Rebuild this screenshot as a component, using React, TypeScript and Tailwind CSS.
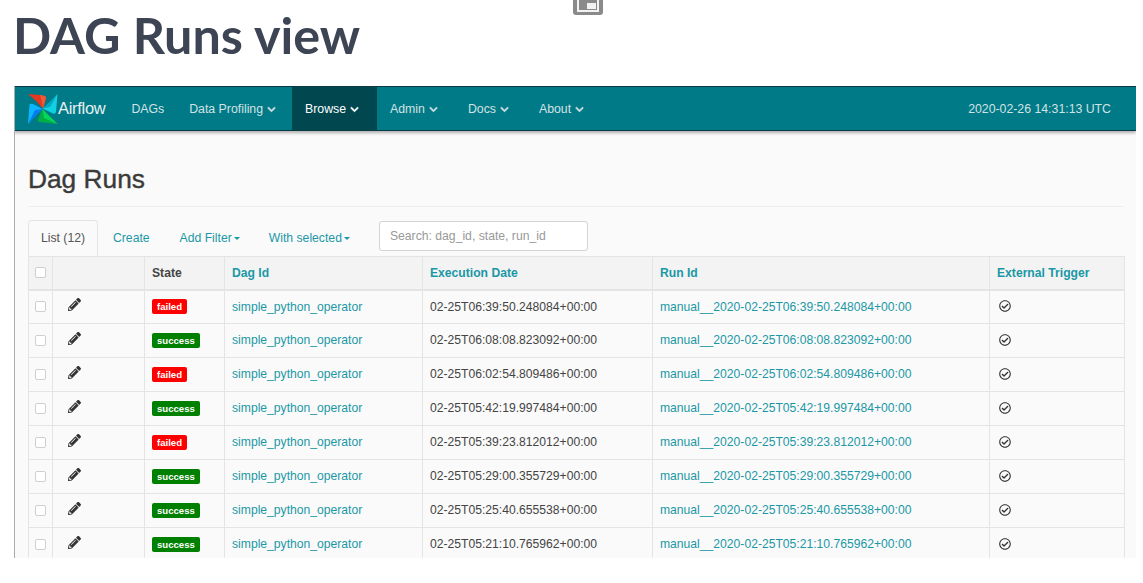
import { FaChevronDown, FaPencilAlt, FaRegCheckCircle } from 'react-icons/fa';

const runs = [
  { state: 'failed', date: '02-25T06:39:50.248084+00:00' },
  { state: 'success', date: '02-25T06:08:08.823092+00:00' },
  { state: 'failed', date: '02-25T06:02:54.809486+00:00' },
  { state: 'success', date: '02-25T05:42:19.997484+00:00' },
  { state: 'failed', date: '02-25T05:39:23.812012+00:00' },
  { state: 'success', date: '02-25T05:29:00.355729+00:00' },
  { state: 'success', date: '02-25T05:25:40.655538+00:00' },
  { state: 'success', date: '02-25T05:21:10.765962+00:00' },
];

const menu = [
  { label: 'DAGs', className: 'ml-[26px]' },
  { label: 'Data Profiling', caret: true, className: 'ml-[25px]' },
  { label: 'Browse', caret: true, active: true, className: 'ml-[16px]' },
  { label: 'Admin', caret: true, className: 'ml-[13px]' },
  { label: 'Docs', caret: true, className: 'ml-[30px]' },
  { label: 'About', caret: true, className: 'ml-[30px]' },
];

function Logo() {
  return (
    <svg viewBox="0 0 30 30" className="w-[30px] h-[30px] shrink-0">
      <path d="M0 0 L12 1 Q19 2 18 4 L15 14.5 Q9 7 0 0Z" fill="#e43921" />
      <path d="M12 1 Q19 2 18 4 L15 14.5 Q14 7 12 1Z" fill="#f0583a" />
      <path d="M29.5 0 L28 18 Q27 21 24 19 L14.5 14.5 Q22 9 29.5 0Z" fill="#11d1e0" />
      <path d="M29.5 0 L22 13 L14.5 14.5 Q22 9 29.5 0Z" fill="#00a7c4" />
      <path d="M29.5 30 L11 28 Q9 27 10 25 L14.5 15 Q21 22 29.5 30Z" fill="#00ad46" />
      <path d="M29.5 30 L16 24 L14.5 15 Q21 22 29.5 30Z" fill="#04d659" />
      <path d="M0 30 L1.5 11 Q2 9 5 10 L14.5 15 Q7 21 0 30Z" fill="#0cb6ff" />
      <path d="M0 30 L7 16 L14.5 15 Q7 21 0 30Z" fill="#017cee" />
    </svg>
  );
}

function Caret() {
  return <span className="inline-block ml-[2px] align-middle border-x-[3.5px] border-x-transparent border-t-[3.5px] border-t-[#1a98a6]" />;
}

function Checkbox() {
  return <div className="w-[11px] h-[11px] rounded-[2px] border border-[#cfcfcf] bg-white mx-auto" />;
}

export default function App() {
  return (
    <div className="relative w-[1143px] h-[583px] overflow-hidden bg-white font-['Liberation_Sans',sans-serif]">
      {/* floating picture-in-picture button cut off by the top of the page */}
      <div className="absolute left-[573px] top-[-12px] w-[30px] h-[27px] rounded-[3px] bg-[#8a8a8a] flex items-center justify-center">
        <div className="w-[22px] h-[17px] mt-[3px] border-2 border-[#f2f2f2] flex items-end justify-end p-[1px]">
          <div className="w-[9px] h-[6px] bg-[#f2f2f2]" />
        </div>
      </div>

      <h1 className="pl-[13px] pt-[6px] h-[86px] font-['Lato',sans-serif] font-bold text-[50.3px] leading-[58px] text-[#3d4454]">
        DAG Runs view
      </h1>

      <div className="ml-[14px] w-[1122px] h-[472px] overflow-hidden bg-[#fafafa] border-l border-l-[#a9adad]">
        <nav className="h-[45px] flex items-stretch -ml-[1px] bg-[#007a87] border-y border-y-[#0a3a44] shadow-[0_2px_3px_rgba(0,0,0,0.3)] text-[12.3px] text-[#d3e2e4]">
          <div className="flex items-center pl-[14px]">
            <Logo />
            <span className="text-[16.5px] text-[#e6f0f1] tracking-[-0.3px]">Airflow</span>
          </div>
          {menu.map((item) => (
            <div
              key={item.label}
              className={`flex items-center gap-1 pt-[1px] ${item.className} ${item.active ? 'bg-[#00474f] text-white pl-[13px] pr-[18px]' : ''}`}
            >
              {item.label}
              {item.caret && <FaChevronDown className="w-[9px] h-[9px] stroke-current stroke-[30]" />}
            </div>
          ))}
          <div className="ml-auto flex items-center pt-[1px] pr-[25px]">2020-02-26 14:31:13 UTC</div>
        </nav>

        <div className="pl-[13px] pr-[12px]">
          <h2 className="mt-[32px] h-[44px] pb-[14px] border-b border-b-[#eeeeee] text-[26.3px] leading-[32px] font-normal text-[#3b3b3b] [-webkit-text-stroke:0.4px_#3b3b3b]">
            Dag Runs
          </h2>

          <div className="mt-[13px] h-[36px] flex items-stretch text-[12.2px] text-[#1a98a6]">
            <div className="w-[70px] flex items-center justify-center rounded-t-[4px] border border-[#e4e4e4] border-b-0 text-[#555555] bg-[#fafafa]">
              List (12)
            </div>
            <div className="ml-[15px] flex items-center">Create</div>
            <div className="ml-[30px] flex items-center">Add Filter<Caret /></div>
            <div className="ml-[29px] flex items-center">With selected<Caret /></div>
            <div className="ml-[29px] mt-[1px] mb-[5px] w-[209px] px-[10px] flex items-center rounded-[3px] border border-[#d4d4d4] bg-white text-[#999999]">
              Search: dag_id, state, run_id
            </div>
          </div>

          <table className="w-[1096px] table-fixed border-collapse text-[12.15px] text-[#1a98a6]">
            <colgroup>
              <col className="w-[24px]" />
              <col className="w-[92px]" />
              <col className="w-[80px]" />
              <col className="w-[198px]" />
              <col className="w-[230px]" />
              <col className="w-[337px]" />
              <col className="w-[135px]" />
            </colgroup>
            <thead>
              <tr className="h-[33px] bg-[#f3f3f3] text-left font-bold border-b-2 border-b-[#e4e4e4]">
                <th className="border border-[#e4e4e4]"><Checkbox /></th>
                <th className="border border-[#e4e4e4]" />
                <th className="border border-[#e4e4e4] px-[7px] text-[#444444]">State</th>
                <th className="border border-[#e4e4e4] px-[7px]">Dag Id</th>
                <th className="border border-[#e4e4e4] px-[7px]">Execution Date</th>
                <th className="border border-[#e4e4e4] px-[7px]">Run Id</th>
                <th className="border border-[#e4e4e4] px-[7px]">External Trigger</th>
              </tr>
            </thead>
            <tbody>
              {runs.map((run) => (
                <tr key={run.date} className="h-[34px]">
                  <td className="border border-[#e4e4e4]"><Checkbox /></td>
                  <td className="border border-[#e4e4e4] pl-[15px]">
                    <FaPencilAlt className="w-[13px] h-[13px] text-[#333333] -mt-[5px]" />
                  </td>
                  <td className="border border-[#e4e4e4] px-[7px] pb-[1px]">
                    <span
                      className={`inline-block h-[15px] leading-[15px] px-[5px] rounded-[2px] text-[9.6px] font-bold text-white ${
                        run.state === 'failed' ? 'bg-[#ff0000]' : 'bg-[#008000]'
                      }`}
                    >
                      {run.state}
                    </span>
                  </td>
                  <td className="border border-[#e4e4e4] px-[7px]">simple_python_operator</td>
                  <td className="border border-[#e4e4e4] px-[7px] text-[#444444]">{run.date}</td>
                  <td className="border border-[#e4e4e4] px-[7px]">manual__2020-{run.date}</td>
                  <td className="border border-[#e4e4e4] px-[9px]">
                    <FaRegCheckCircle className="w-[12px] h-[12px] text-[#333333] -mt-[2px]" />
                  </td>
                </tr>
              ))}
            </tbody>
          </table>
        </div>
      </div>
    </div>
  );
}
